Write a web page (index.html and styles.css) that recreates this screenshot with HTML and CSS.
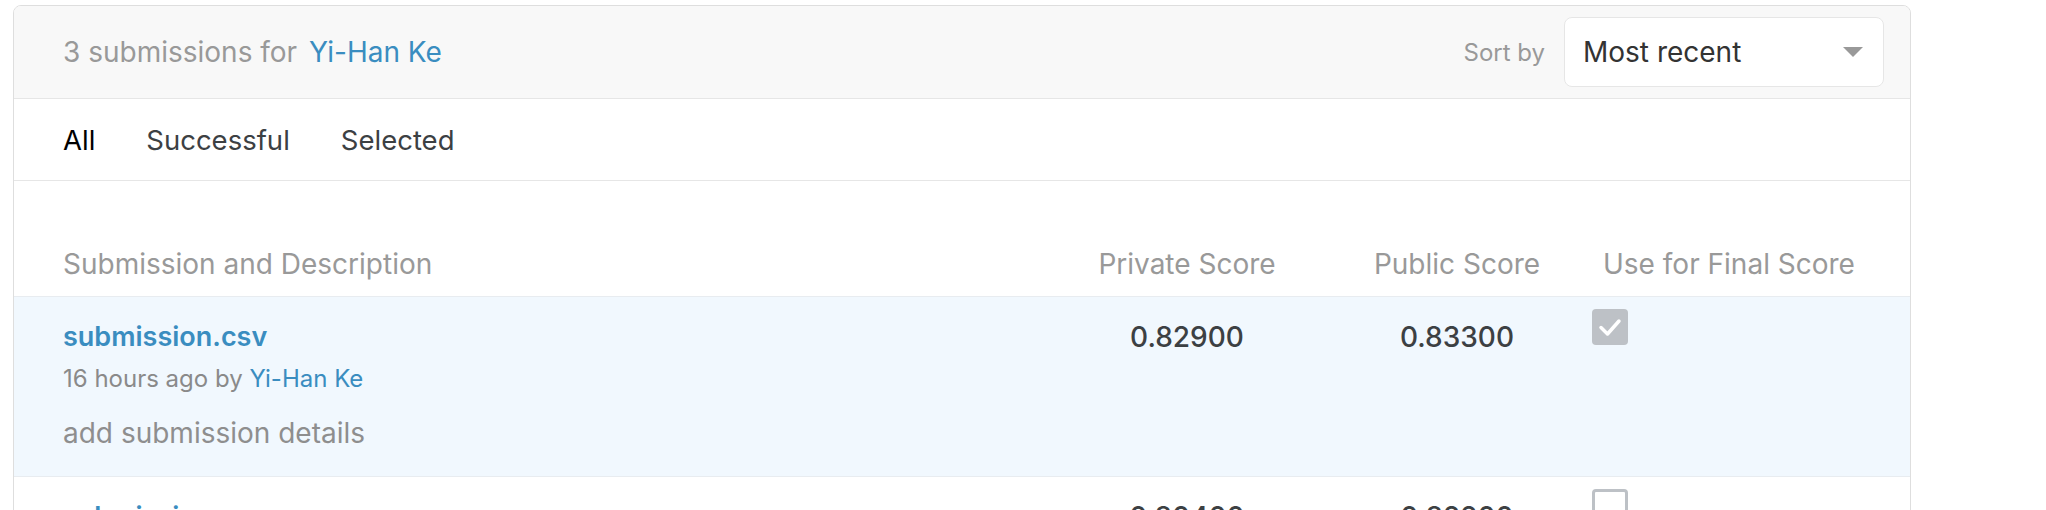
FILE: index.html
```html
<!DOCTYPE html>
<html>
<head>
<meta charset="utf-8">
<link rel="stylesheet" href="styles.css">
</head>
<body>
<div class="card">
  <div class="card-header">
    <div class="title">3 submissions for <a class="link" href="#">Yi-Han Ke</a></div>
    <div class="sort">
      <span class="sort-label">Sort by</span>
      <div class="select">
        <span>Most recent</span>
        <span class="caret"></span>
      </div>
    </div>
  </div>
  <div class="tabs">
    <span class="tab active">All</span>
    <span class="tab">Successful</span>
    <span class="tab">Selected</span>
  </div>
  <div class="table">
    <div class="thead">
      <div class="th name">Submission and Description</div>
      <div class="th center">Private Score</div>
      <div class="th center">Public Score</div>
      <div class="th final">Use for Final Score</div>
    </div>
    <div class="tr selected">
      <div class="td name">
        <a class="file" href="#">submission.csv</a>
        <div class="meta">16 hours ago by <a class="link" href="#">Yi-Han Ke</a></div>
        <div class="desc">add submission details</div>
      </div>
      <div class="td center score">0.82900</div>
      <div class="td center score">0.83300</div>
      <div class="td check-cell"><span class="checkbox checked"><svg viewBox="0 0 36 36" width="36" height="36"><path d="M9 18.5 L15.5 25 L27 12" fill="none" stroke="#fff" stroke-width="3.5" stroke-linecap="round" stroke-linejoin="round"/></svg></span></div>
    </div>
    <div class="tr">
      <div class="td name">
        <a class="file" href="#">submission.csv</a>
      </div>
      <div class="td center score">0.80400</div>
      <div class="td center score">0.82200</div>
      <div class="td check-cell"><span class="checkbox"></span></div>
    </div>
  </div>
</div>
</body>
</html>
```

FILE: styles.css
```css
* { box-sizing: border-box; }
html, body { margin: 0; padding: 0; background: #fff; }
body {
  font-family: Inter, "Noto Sans", "Liberation Sans", sans-serif;
  color: #3c4043;
  height: 510px;
  overflow: hidden;
}
a { text-decoration: none; }
.link { color: #3a8dc0; }

.card {
  margin: 5px 0 0 13px;
  width: 1898px;
  border: 1px solid #dedede;
  border-radius: 8px;
  overflow: hidden;
}

.card-header {
  height: 93px;
  background: #f8f8f8;
  border-bottom: 1px solid #e6e6e6;
  display: flex;
  align-items: center;
  justify-content: space-between;
  padding: 0 26px 0 49px;
}
.title {
  font-size: 28px;
  color: #999;
  line-height: 34px;
}
.title .link { margin-left: 4px; }
.sort { display: flex; align-items: center; gap: 19px; }
.sort-label { font-size: 24px; color: #999; }
.select {
  width: 320px;
  height: 70px;
  background: #fff;
  border: 1px solid #e6e6e6;
  border-radius: 8px;
  display: flex;
  align-items: center;
  justify-content: space-between;
  padding: 0 20px 0 18px;
  font-size: 28px;
  color: #333;
}
.caret {
  width: 0; height: 0;
  border-left: 10px solid transparent;
  border-right: 10px solid transparent;
  border-top: 10px solid #999;
}

.tabs {
  height: 82px;
  border-bottom: 1px solid #e6e6e6;
  display: flex;
  align-items: center;
  gap: 51px;
  padding-left: 49px;
  font-size: 27.5px;
  color: #3c4043;
}
.tab.active { color: #000; }

.thead, .tr {
  display: grid;
  grid-template-columns: 1fr 270px 270px 318px;
}
.thead {
  padding: 66px 0 15px;
  border-bottom: 1px solid #e8ecf0;
}
.th {
  font-size: 28px;
  line-height: 34px;
  color: #999;
}
.name { padding-left: 49px; }
.center { text-align: center; }
.th.final { padding-left: 11px; }

.tr {
  height: 180px;
  border-bottom: 1px solid #e8ecf0;
}
.tr.selected { background: #f1f8fe; }
.td { padding-top: 23px; }
.file {
  display: block;
  font-size: 27px;
  line-height: 34px;
  font-weight: 600;
  color: #3a8dc0;
}
.meta {
  margin-top: 10px;
  font-size: 24px;
  line-height: 29px;
  color: #8a8a8a;
}
.desc {
  margin-top: 23px;
  font-size: 28px;
  line-height: 34px;
  color: #8e8e8e;
}
.score {
  font-size: 28px;
  line-height: 34px;
  font-weight: 500;
  color: #3c4043;
}
.check-cell { padding-top: 12px; }
.checkbox {
  display: block;
  width: 36px;
  height: 36px;
  border-radius: 4px;
  border: 3px solid #bdc1c6;
  background: #fff;
}
.checkbox.checked {
  background: #bdc1c6;
  border: none;
}
.checkbox svg { display: block; }
```
